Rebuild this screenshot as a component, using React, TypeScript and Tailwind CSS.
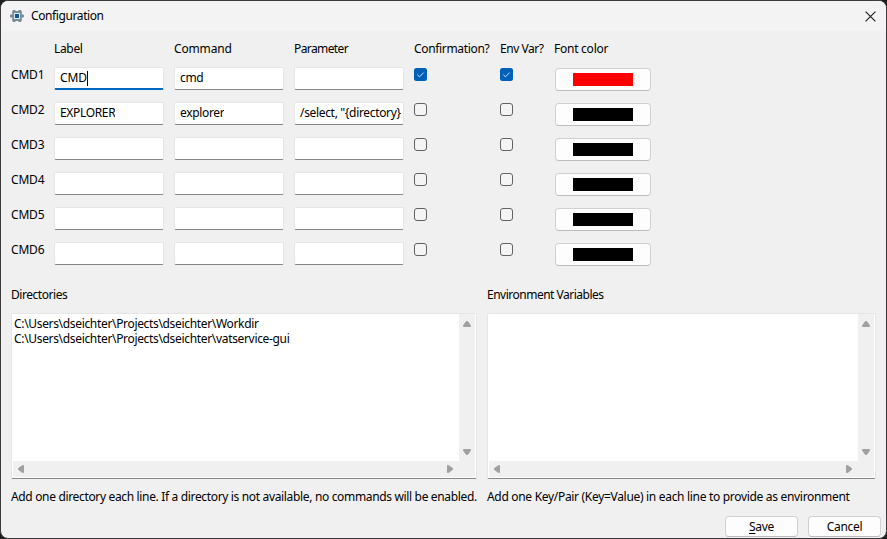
import React from "react";

type Row = { id: string; label: string; command: string; parameter: string; checked: boolean; red: boolean };

const rows: Row[] = [
  { id: "CMD1", label: "CMD", command: "cmd", parameter: "", checked: true, red: true },
  { id: "CMD2", label: "EXPLORER", command: "explorer", parameter: '/select, "{directory}', checked: false, red: false },
  { id: "CMD3", label: "", command: "", parameter: "", checked: false, red: false },
  { id: "CMD4", label: "", command: "", parameter: "", checked: false, red: false },
  { id: "CMD5", label: "", command: "", parameter: "", checked: false, red: false },
  { id: "CMD6", label: "", command: "", parameter: "", checked: false, red: false },
];

function GearIcon() {
  return (
    <svg width="14" height="12" viewBox="0 0 14 12">
      <path
        fill="#7d8b97"
        d="M3 0H5L6 1H8L9 0H11L12 2.2 11.6 3.4 12.3 4.4 14 4.8V7.2L12.3 7.6 11.6 8.6 12 9.8 11 12H9L8 11H6L5 12H3L2 9.8 2.4 8.6 1.7 7.6 0 7.2V4.8L1.7 4.4 2.4 3.4 2 2.2Z"
      />
      <rect x="4" y="3" width="6" height="6" fill="#dcebf6" />
      <rect x="5" y="4" width="4" height="4" fill="#0b559c" />
    </svg>
  );
}

function Field({ value, focused = false }: { value: string; focused?: boolean }) {
  return (
    <div
      className={
        "flex h-[23px] w-[110px] items-center overflow-hidden rounded-[2px] border border-[#e5e5e5] bg-white pr-px pl-[5px] " +
        (focused ? "border-b-2 border-b-[#0067c0]" : "border-b-[#868686] pb-px")
      }
    >
      <div className="flex h-full min-w-0 items-center overflow-hidden whitespace-pre">
        <span className={focused ? "tracking-[-0.1px]" : ""}>{value}</span>
        {focused && <span className="h-[15px] w-px shrink-0 bg-black" />}
      </div>
    </div>
  );
}

function Check({ checked }: { checked: boolean }) {
  return (
    <svg width="13" height="13" viewBox="0 0 13 13">
      {checked ? (
        <>
          <rect width="13" height="13" rx="2.5" fill="#005fb8" />
          <path d="M3.3 6.7 5.5 8.8 9.7 4.6" fill="none" stroke="#d5e7f7" strokeWidth="1" />
        </>
      ) : (
        <rect x="0.5" y="0.5" width="12" height="12" rx="2.5" fill="#f4f4f4" stroke="#626262" />
      )}
    </svg>
  );
}

function Arrow({ d }: { d: string }) {
  return (
    <svg width="8" height="8" viewBox="0 0 8 8">
      <path d={d} fill="#a0a0a0" stroke="#a0a0a0" strokeWidth="1" strokeLinejoin="round" />
    </svg>
  );
}

function TextBox({ lines, width }: { lines: string[]; width: string }) {
  return (
    <div className={"flex h-[166px] flex-col rounded-[2px] border border-[#e5e5e5] border-b-[#868686] bg-white pr-px pb-px pl-px " + width}>
      <div className="flex flex-1">
        <div className="flex-1 pt-[2px] pl-px leading-[15px] whitespace-pre">
          {lines.map((line) => (
            <div key={line}>{line}</div>
          ))}
        </div>
        <div className="flex w-4 flex-col items-center justify-between bg-[#f0f0f0] pt-[6px] pb-[5px]">
          <Arrow d="M3.4 1.5H4.6L7.5 5.5V6.5H.5V5.5Z" />
          <Arrow d="M3.4 6.5H4.6L7.5 2.5V1.5H.5V2.5Z" />
        </div>
      </div>
      <div className="flex h-4 items-center justify-between bg-[#f0f0f0] pr-[21px] pl-[4px]">
        <Arrow d="M1.5 3.4V4.6L5.5 7.5H6.5V.5H5.5Z" />
        <Arrow d="M6.5 3.4V4.6L2.5 7.5H1.5V.5H2.5Z" />
      </div>
    </div>
  );
}

const grid = "grid grid-cols-[43px_120px_120px_120px_86px_54px_97px]";

export default function App() {
  return (
    <div className="h-[539px] w-[887px] overflow-hidden bg-[#1e1d1e] font-['Noto_Sans',sans-serif] text-[12px] leading-[16px] tracking-[-0.33px] text-black">
      <div className="flex h-full flex-col overflow-hidden rounded-[8px] border border-[#3c3a3c] bg-[#f0f0f0]">
        <header className="flex h-[30px] shrink-0 items-center bg-[#f3f3f3] pr-[10px] pl-[9px]">
          <GearIcon />
          <h1 className="ml-[7px] flex-1 tracking-[-0.4px]">Configuration</h1>
          <svg width="11" height="11" viewBox="0 0 11 11">
            <path d="M.6 .6 10.4 10.4M10.4 .6 .6 10.4" stroke="#1a1a1a" strokeWidth="1.1" />
          </svg>
        </header>

        <main className="flex flex-1 flex-col pl-[10px]">
          <div className={grid + " h-[36px] pt-[10px] whitespace-nowrap"}>
            <span />
            <span>Label</span>
            <span className="tracking-[-0.15px]">Command</span>
            <span className="tracking-[-0.6px]">Parameter</span>
            <span>Confirmation?</span>
            <span className="tracking-[-0.45px]">Env Var?</span>
            <span className="tracking-[-0.25px]">Font color</span>
          </div>
          {rows.map((row) => (
            <div key={row.id} className={grid + " h-[35px] items-start"}>
              <span className="tracking-[-0.2px]">{row.id}</span>
              <Field value={row.label} focused={row.id === "CMD1"} />
              <Field value={row.command} />
              <Field value={row.parameter} />
              <div className="pt-px"><Check checked={row.checked} /></div>
              <div className="pt-px"><Check checked={row.checked} /></div>
              <button className="mt-px ml-px flex h-[23px] w-24 items-center justify-center rounded-[4px] border border-[#d0d0d0] border-b-[#bcbcbc] bg-[#fdfdfd] pb-px">
                <span className={"h-[13px] w-[60px] " + (row.red ? "bg-[#ff0000]" : "bg-black")} />
              </button>
            </div>
          ))}

          <div className="mt-[10px] flex gap-[10px]">
            <section className="w-[466px] whitespace-nowrap">
              <h2 className="mb-[10px] tracking-[-0.45px]">Directories</h2>
              <TextBox
                width="w-[466px]"
                lines={["C:\\Users\\dseichter\\Projects\\dseichter\\Workdir", "C:\\Users\\dseichter\\Projects\\dseichter\\vatservice-gui"]}
              />
              <p className="mt-[10px] tracking-[-0.34px]">Add one directory each line. If a directory is not available, no commands will be enabled.</p>
            </section>
            <section className="w-[389px] whitespace-nowrap">
              <h2 className="mb-[10px] tracking-[-0.5px]">Environment Variables</h2>
              <TextBox width="w-[389px]" lines={[]} />
              <p className="mt-[10px] tracking-[-0.31px]">Add one Key/Pair (Key=Value) in each line to provide as environment</p>
            </section>
          </div>

          <footer className="mt-[11px] flex justify-end gap-[10px] pr-[5px]">
            <button className="h-[21px] w-[73px] rounded-[4px] border border-[#d0d0d0] border-b-[#bcbcbc] bg-[#fdfdfd]">
              <span className="underline underline-offset-2">S</span>ave
            </button>
            <button className="h-[21px] w-[73px] rounded-[4px] border border-[#d0d0d0] border-b-[#bcbcbc] bg-[#fdfdfd]">Cancel</button>
          </footer>
        </main>
      </div>
    </div>
  );
}
